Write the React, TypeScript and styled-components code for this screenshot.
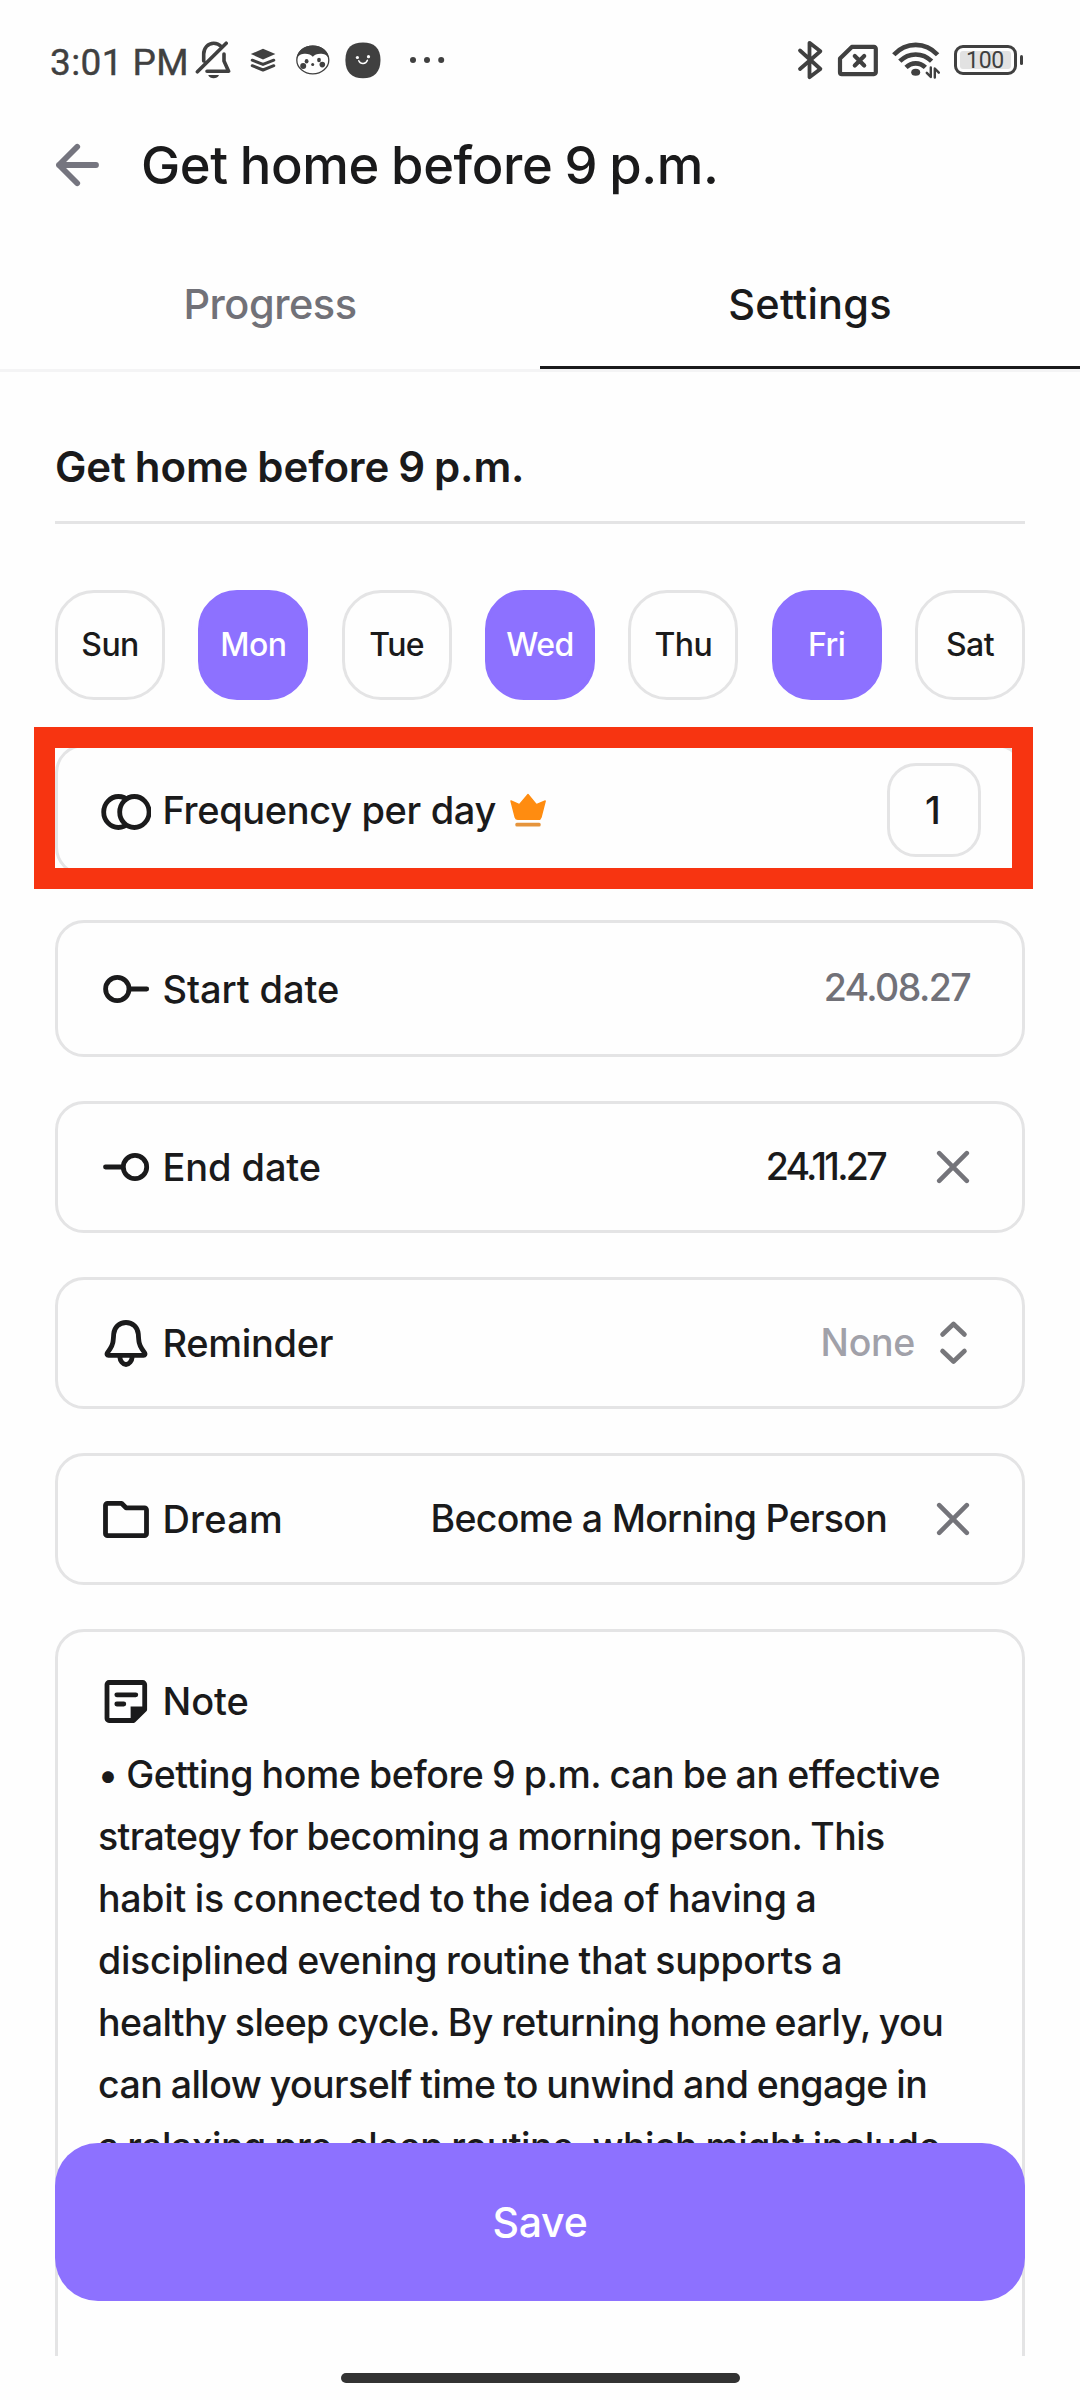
import React from "react";
import styled, { createGlobalStyle } from "styled-components";

const INK = "#1a1a1b";
const MUTED = "#717178";
const FAINT = "#a1a1a9";
const LINE = "#e4e4e5";
const VIOLET = "#8d71ff";
const STATUS = "#404040";

const GlobalStyle = createGlobalStyle`
  * { box-sizing: border-box; }
  body { margin: 0; background: #fefefe; }
`;

const Screen = styled.div`
  width: 1080px;
  height: 2400px;
  display: flex;
  flex-direction: column;
  overflow: hidden;
  background: #fefefe;
  color: ${INK};
  font-family: Inter, "Liberation Sans", sans-serif;
  font-weight: 500;
`;

/* ---------- status bar ---------- */

const StatusBar = styled.div`
  height: 120px;
  flex: none;
  display: flex;
  align-items: center;
  justify-content: space-between;
  padding: 0 57px 0 50px;
  color: ${STATUS};
`;

const StatusGroup = styled.div`
  display: flex;
  align-items: center;
`;

const Clock = styled.span`
  width: 145px;
  padding-top: 5px;
  font: 400 37px/44px Roboto, sans-serif;
  letter-spacing: 0.4px;
  -webkit-text-stroke: 0.4px ${STATUS};
  white-space: nowrap;
`;

const Glyph = styled.svg<{ $gap?: number }>`
  display: block;
  flex: none;
  fill: none;
  stroke-linecap: round;
  stroke-linejoin: round;
  margin-left: ${(p) => p.$gap ?? 0}px;
`;

const Battery = styled.div`
  display: flex;
  align-items: center;
  gap: 3px;
  margin-left: 14px;
  &::after {
    content: "";
    width: 3.5px;
    height: 10px;
    border-radius: 2px;
    background: ${STATUS};
  }
`;

const BatteryBody = styled.div`
  width: 63px;
  height: 30px;
  padding: 3px;
  border: 3px solid ${STATUS};
  border-radius: 9px;
`;

const BatteryLevel = styled.div`
  height: 18px;
  border-radius: 3px;
  background: #e2e2e2;
  font: 400 23px/20px Roboto, sans-serif;
  letter-spacing: -0.3px;
  text-align: center;
`;

/* ---------- header and tabs ---------- */

const Header = styled.header`
  height: 90px;
  flex: none;
  display: flex;
  align-items: center;
  padding-left: 54px;
  gap: 40px;
`;

const Title = styled.h1`
  margin: 0;
  font-size: 52.5px;
  line-height: 64px;
  font-weight: 500;
  letter-spacing: -0.4px;
  word-spacing: -1.5px;
`;

const Tabs = styled.nav`
  height: 162px;
  flex: none;
  display: grid;
  grid-template-columns: 1fr 1fr;
  border-bottom: 3px solid #f4f4f5;
`;

const Tab = styled.div<{ $active?: boolean }>`
  display: flex;
  align-items: center;
  justify-content: center;
  padding-top: 31px;
  font-size: 41.5px;
  letter-spacing: ${(p) => (p.$active ? 0.2 : -0.5)}px;
  color: ${(p) => (p.$active ? INK : MUTED)};
  border-bottom: 3px solid ${(p) => (p.$active ? "#1a1a1b" : "transparent")};
`;

/* ---------- form ---------- */

const Viewport = styled.main`
  flex: 1;
  min-height: 0;
  overflow: hidden;
  position: relative;
  padding: 0 55px;
`;

const HabitName = styled.h2`
  margin: 0;
  padding: 70px 0 29px;
  border-bottom: 3px solid ${LINE};
  font-size: 42px;
  line-height: 50px;
  font-weight: 600;
  letter-spacing: -0.1px;
  word-spacing: -1.5px;
`;

const Days = styled.div`
  display: flex;
  justify-content: space-between;
  margin: 66px 0 44px;
`;

const Day = styled.div<{ $on: boolean }>`
  width: 110px;
  height: 110px;
  display: flex;
  align-items: center;
  justify-content: center;
  padding-bottom: 1px;
  border: 3px solid ${(p) => (p.$on ? VIOLET : LINE)};
  border-radius: 39px;
  background: ${(p) => (p.$on ? VIOLET : "#fefefe")};
  color: ${(p) => (p.$on ? "#fff" : INK)};
  font-size: 32px;
  letter-spacing: -0.6px;
`;

const Cards = styled.div`
  display: flex;
  flex-direction: column;
  gap: 44px;
`;

const Card = styled.section<{ $height?: number; $end?: number }>`
  position: relative;
  height: ${(p) => p.$height ?? 132}px;
  flex: none;
  display: flex;
  align-items: center;
  padding: 0 ${(p) => p.$end ?? 52}px 0 43px;
  border: 3px solid ${LINE};
  border-radius: 29px;
`;

const Highlight = styled.div`
  position: absolute;
  left: -24px;
  top: -20px;
  width: 999px;
  height: 162px;
  border: 21px solid #f73411;
`;

const Label = styled.span<{ $track?: number }>`
  margin-left: 11.5px;
  font-size: 38px;
  line-height: 48px;
  letter-spacing: ${(p) => p.$track ?? -0.1}px;
  white-space: nowrap;
`;

const Value = styled.span<{ $color?: string; $gap?: number; $track?: number }>`
  margin-left: auto;
  margin-right: ${(p) => p.$gap ?? 0}px;
  padding-bottom: 1px;
  font-size: 37.5px;
  line-height: 48px;
  letter-spacing: ${(p) => p.$track ?? 0}px;
  white-space: nowrap;
  color: ${(p) => p.$color ?? INK};
`;

const Count = styled.div`
  width: 94px;
  height: 94px;
  margin-left: auto;
  display: flex;
  align-items: center;
  justify-content: center;
  border: 3px solid ${LINE};
  border-radius: 29px;
  padding-right: 2px;
  font-size: 38px;
`;

const NoteCard = styled.section`
  height: 760px;
  flex: none;
  padding: 26px 36px 0 40px;
  border: 3px solid ${LINE};
  border-radius: 29px;
`;

const NoteHead = styled.div`
  height: 86px;
  display: flex;
  align-items: center;
  padding: 0 0 1px 3px;
`;

const NoteLine = styled.div<{ $track: number }>`
  font-size: 37.5px;
  line-height: 62px;
  white-space: nowrap;
  word-spacing: -1px;
  letter-spacing: ${(p) => p.$track}px;
`;

const SaveButton = styled.button`
  position: absolute;
  left: 55px;
  right: 55px;
  bottom: 55px;
  height: 158px;
  padding: 0;
  border: 0;
  border-radius: 43px;
  background: ${VIOLET};
  color: #fff;
  font: 500 41px/50px Inter, sans-serif;
  letter-spacing: -0.2px;
`;

const NavArea = styled.div`
  height: 44px;
  flex: none;
  display: flex;
  justify-content: center;
  padding-top: 17px;
  background: #fefefe;
`;

const NavHandle = styled.div`
  width: 399px;
  height: 10px;
  border-radius: 5px;
  background: #333;
`;

/* ---------- icons ---------- */

const StatusLeftIcons = () => (
  <>
    <Glyph width="36" height="40" viewBox="0 0 36 40" stroke={STATUS} strokeWidth="3.6">
      <path d="M8.7 21V14C8.7 8 13 3.2 18.7 3.2c3.2 0 5.6 1.2 7.4 3.2M2.4 31.8 31.2 3.2M29 14v7l4.6 10.2H12" />
      <path d="M13.2 35h10.8c-1.6 4.4-9.2 4.4-10.8 0z" fill={STATUS} stroke="none" />
    </Glyph>
    <Glyph $gap={19} width="26" height="24" viewBox="0 0 26 24">
      <path d="M.8 6 13 .8 25.4 6 13 11.4z" fill={STATUS} />
      <path d="M2.2 12.2 13 16.4l10.8-4.2M2.2 17.7 13 22l10.8-4.3" stroke={STATUS} strokeWidth="3" />
    </Glyph>
    <Glyph $gap={19} width="36" height="32" viewBox="0 0 36 32">
      <ellipse cx="17.8" cy="16" rx="16" ry="13.9" fill="#fff" stroke={STATUS} strokeWidth="1.3" />
      <path d="M1.6 15C2.4 6.4 9 1.4 17.8 1.4S33.2 6.4 34 15c-1.8-4-5-5.2-8.6-5.2-3.4 0-6 1-7.6 3-1.6-2-4.2-3-7.4-3C6.8 9.8 3.4 11 1.6 15z" fill={STATUS} />
      <g fill={STATUS}>
        <ellipse cx="11.6" cy="17.2" rx="1.9" ry="2.3" />
        <ellipse cx="24" cy="16" rx="1.9" ry="2.3" />
        <circle cx="8.2" cy="22" r="3" />
        <circle cx="27.3" cy="20.6" r="2.8" />
        <circle cx="17.7" cy="20.5" r="1.5" />
      </g>
    </Glyph>
    <Glyph $gap={14} width="36" height="37" viewBox="0 0 36 37">
      <path d="M18 .5C29 .5 35.5 6 35.5 18S29 36.3 18 36.3.4 30.5.4 18 7 .5 18 .5z" fill={STATUS} />
      <circle cx="12.4" cy="15.5" r="1.6" fill="#fff" />
      <circle cx="23.5" cy="14.7" r="1.6" fill="#fff" />
      <path d="M13.8 18.8c1.8 3.9 7 3.6 8.6-.6" stroke="#fff" strokeWidth="1.5" />
    </Glyph>
    <Glyph $gap={28} width="36" height="8" viewBox="0 0 36 8">
      <g fill={STATUS}>
        <circle cx="4" cy="4" r="3" />
        <circle cx="18" cy="4" r="3" />
        <circle cx="32.2" cy="4" r="3" />
      </g>
    </Glyph>
  </>
);

const StatusRightIcons = () => (
  <>
    <Glyph width="27" height="40" viewBox="0 0 27 40" stroke={STATUS} strokeWidth="3.8">
      <path d="M3 10.5 23.4 29 12.5 37.2V2.8l10.9 8.4L3 29" />
    </Glyph>
    <Glyph $gap={13} width="42" height="33" viewBox="0 0 42 33" stroke={STATUS} strokeWidth="4.2">
      <path d="M14.8 2.9H37a1.8 1.8 0 0 1 1.8 1.8v23.6a1.8 1.8 0 0 1-1.8 1.8H4.8A1.8 1.8 0 0 1 3 28.3V14.5zM17.8 12l9.4 9.4M27.2 12l-9.4 9.4" />
    </Glyph>
    <Glyph $gap={13} width="48" height="38" viewBox="0 0 48 38" stroke={STATUS} strokeWidth="4.6">
      <g strokeLinecap="butt">
        <path d="M1.8 13.8C14 .6 33.4.6 45.6 13.8M7.8 20.2c9-9 22.8-9 31.8 0M14 26.4c5.6-5.4 13.8-5.4 19.4 0" />
      </g>
      <ellipse cx="23.7" cy="31.3" rx="4.5" ry="3.5" fill={STATUS} stroke="none" />
      <path d="M38.8 26.5V36l-4-4.2M42.8 36.5v-9l4 4.2" strokeWidth="2.4" />
    </Glyph>
  </>
);

const BackArrow = () => (
  <Glyph width="47" height="46" viewBox="0 0 47 46" stroke="#75757f" strokeWidth="5.8">
    <path d="M42 23H5M23.2 4.8 5 23l18.2 18.2" />
  </Glyph>
);

const RowIcon = ({ children }: { children: React.ReactNode }) => (
  <Glyph width="50" height="50" viewBox="0 0 50 50" stroke={INK} strokeWidth="4.8">
    {children}
  </Glyph>
);

const Crown = () => (
  <Glyph $gap={13} width="38" height="36" viewBox="0 0 38 36">
    <path d="M2 9l8.4 3.6L19 2.5l8.4 10.1L36.2 9 32 25.2a3 3 0 0 1-2.8 2.2H9a3 3 0 0 1-2.8-2.2z" fill="#ff8c10" stroke="#ff8c10" strokeWidth="1.4" />
    <rect x="6.3" y="30.8" width="25.4" height="3.8" rx="1.5" fill="#e5943c" />
  </Glyph>
);

const Clear = () => (
  <Glyph width="34" height="34" viewBox="0 0 34 34" stroke="#74747a" strokeWidth="4.6">
    <path d="M3.2 3.2l27.6 27.6M30.8 3.2 3.2 30.8" />
  </Glyph>
);

const Sorter = () => (
  <Glyph width="34" height="46" viewBox="0 0 34 46" stroke="#77777b" strokeWidth="4.6">
    <path d="M6.5 14.5 17.5 4l11 10.5M6.5 31l11 10.5 11-10.5" />
  </Glyph>
);

/* ---------- screen ---------- */

const WEEK: [string, boolean][] = [
  ["Sun", false],
  ["Mon", true],
  ["Tue", false],
  ["Wed", true],
  ["Thu", false],
  ["Fri", true],
  ["Sat", false],
];

const NOTE: [string, number][] = [
  ["• Getting home before 9 p.m. can be an effective", -0.42],
  ["strategy for becoming a morning person. This", -0.6],
  ["habit is connected to the idea of having a", -0.24],
  ["disciplined evening routine that supports a", -0.29],
  ["healthy sleep cycle. By returning home early, you", -0.6],
  ["can allow yourself time to unwind and engage in", -0.55],
  ["a relaxing pre-sleep routine, which might include", -0.52],
];

export default function App() {
  return (
    <Screen>
      <GlobalStyle />
      <StatusBar>
        <StatusGroup>
          <Clock>3:01 PM</Clock>
          <StatusLeftIcons />
        </StatusGroup>
        <StatusGroup>
          <StatusRightIcons />
          <Battery>
            <BatteryBody>
              <BatteryLevel>100</BatteryLevel>
            </BatteryBody>
          </Battery>
        </StatusGroup>
      </StatusBar>

      <Header>
        <BackArrow />
        <Title>Get home before 9 p.m.</Title>
      </Header>

      <Tabs>
        <Tab>Progress</Tab>
        <Tab $active>Settings</Tab>
      </Tabs>

      <Viewport>
        <HabitName>Get home before 9 p.m.</HabitName>
        <Days>
          {WEEK.map(([name, on]) => (
            <Day key={name} $on={on}>
              {name}
            </Day>
          ))}
        </Days>

        <Cards>
          <Card $end={41}>
            <RowIcon>
              <ellipse cx="17.4" cy="27" rx="14.7" ry="15.5" />
              <ellipse cx="33.4" cy="27" rx="14.7" ry="15.5" fill="#fefefe" />
            </RowIcon>
            <Label $track={-0.35}>Frequency per day</Label>
            <Crown />
            <Count>1</Count>
            <Highlight />
          </Card>

          <Card $height={137}>
            <RowIcon>
              <circle cx="16.3" cy="25" r="11.7" />
              <path d="M28.5 25h17.2" />
            </RowIcon>
            <Label>Start date</Label>
            <Value $track={-1.6} $color={MUTED}>24.08.27</Value>
          </Card>

          <Card>
            <RowIcon>
              <circle cx="34" cy="25" r="11.7" />
              <path d="M4.5 25h17.2" />
            </RowIcon>
            <Label>End date</Label>
            <Value $track={-2.7} $gap={51}>24.11.27</Value>
            <Clear />
          </Card>

          <Card>
            <RowIcon>
              <path d="M25 4.5c-6.8 0-11.8 5-12.3 11.5-.5 8-.7 10.5-3.6 14.8L6.2 35c-.6 1.2-.1 2.300 1.300 2.300h35c1.400 0 1.900-1.100 1.300-2.300l-2.900-4.200c-2.900-4.300-3.100-6.800-3.600-14.800C36.800 9.500 31.800 4.500 25 4.500zM18.700 38.500c.4 4.700 3.300 8 6.300 8s5.900-3.300 6.300-8" />
            </RowIcon>
            <Label $track={-0.3}>Reminder</Label>
            <Value $color={FAINT} $gap={21} $track={-0.3}>None</Value>
            <Sorter />
          </Card>

          <Card>
            <RowIcon>
              <path d="M6.5 9.3h14L25 13.8h18.5a2 2 0 0 1 2 2v23.9a2 2 0 0 1-2 2h-37a2 2 0 0 1-2-2V11.3a2 2 0 0 1 2-2z" />
            </RowIcon>
            <Label $track={0.2}>Dream</Label>
            <Value $gap={49} $track={-0.72}>Become a Morning Person</Value>
            <Clear />
          </Card>

          <NoteCard>
            <NoteHead>
              <RowIcon>
                <path d="M8 6.5h33.7a2 2 0 0 1 2 2v25L32.5 44.5H8a2 2 0 0 1-2-2v-34a2 2 0 0 1 2-2zM15.8 18.8h19M15.8 28h7" />
                <path d="M29.6 30.4H45v3L32.8 45.5h-3.2z" fill={INK} stroke="none" />
              </RowIcon>
              <Label>Note</Label>
            </NoteHead>
            {NOTE.map(([text, track]) => (
              <NoteLine key={text} $track={track}>
                {text}
              </NoteLine>
            ))}
          </NoteCard>
        </Cards>

        <SaveButton>Save</SaveButton>
      </Viewport>

      <NavArea>
        <NavHandle />
      </NavArea>
    </Screen>
  );
}
